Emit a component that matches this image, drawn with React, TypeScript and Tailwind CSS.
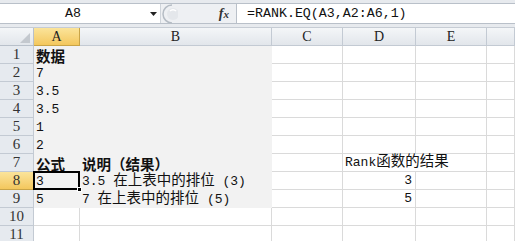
import React from 'react';
import clsx from 'clsx';

type Row = {
  n: number;
  a?: string;
  b?: string;
  d?: string;
  bold?: boolean;
  dRight?: boolean;
};

const rows: Row[] = [
  { n: 1, a: '数据', bold: true },
  { n: 2, a: '7' },
  { n: 3, a: '3.5' },
  { n: 4, a: '3.5' },
  { n: 5, a: '1' },
  { n: 6, a: '2' },
  { n: 7, a: '公式', b: '说明（结果）', d: 'Rank函数的结果', bold: true },
  { n: 8, a: '3', b: '3.5 在上表中的排位 (3)', d: '3', dRight: true },
  { n: 9, a: '5', b: '7 在上表中的排位 (5)', d: '5', dRight: true },
  { n: 10 },
  { n: 11 },
];

const colLetters = ['A', 'B', 'C', 'D', 'E', ''];

// split text into CJK / latin runs so each gets its own size (like SimSun half/full width)
function Mixed({ text, bold }: { text: string; bold?: boolean }) {
  const parts = text.split(/([\u3000-\u9fff\uff00-\uffef]+)/).filter(Boolean);
  return (
    <span className={clsx('inline-flex items-baseline leading-[14px]', bold && 'font-bold')}>
      {parts.map((p, i) =>
        /[\u3000-\u9fff\uff00-\uffef]/.test(p) ? (
          <span key={i} className="font-['Noto_Sans_CJK_SC',sans-serif] text-[14.5px]">
            {p}
          </span>
        ) : (
          <span key={i} className="font-['Liberation_Mono',monospace] text-[13px] font-normal whitespace-pre">
            {p}
          </span>
        )
      )}
    </span>
  );
}

function FormulaBar() {
  return (
    <div className="h-[28px] bg-[#e7eaee] border-b border-[#c6ccd4] pt-[3px]">
      <div className="flex h-[21px] border-y border-[#b9c0c9]">
        {/* name box */}
        <div className="w-[146px] bg-white flex items-center justify-center font-['Liberation_Mono',monospace] text-[13.3px] text-[#111]">
          A8
        </div>
        <div className="w-[14px] bg-white flex items-center justify-center">
          <svg width="7" height="4" viewBox="0 0 7 4">
            <path d="M0 0h7L3.5 4z" fill="#222" />
          </svg>
        </div>
        {/* splitter grip */}
        <div className="w-[76px] bg-[#eef0f3] flex items-center border-l border-[#cfd4da]">
          <svg width="16" height="20" viewBox="0 0 16 20" className="ml-[1px]">
            <path d="M10 1 A9 9 0 0 0 10 19" fill="none" stroke="#b5bcc4" strokeWidth="1.5" />
            <circle cx="11" cy="10" r="6" fill="#e4e7eb" />
            <path d="M8 7 A4 4 0 0 1 14 7" fill="none" stroke="#ffffff" strokeWidth="1.5" />
          </svg>
          <span className="ml-auto mr-[7px] font-['Liberation_Serif',serif] italic font-bold text-[14px] text-[#333] leading-none">
            f<span className="text-[11px]">x</span>
          </span>
        </div>
        <div className="flex-1 bg-white border-l border-[#b9c0c9] flex items-center pl-[10px] font-['Liberation_Mono',monospace] text-[13.3px] text-[#111]">
          =RANK.EQ(A3,A2:A6,1)
        </div>
      </div>
    </div>
  );
}

function Cell({ row, col }: { row: Row; col: number }) {
  const gray = row.n <= 9 && col <= 1;
  let text: string | undefined;
  if (col === 0) text = row.a;
  if (col === 1) text = row.b;
  if (col === 3) text = row.d;
  const selected = row.n === 8 && col === 0;
  const overflow = row.n === 7 && col === 3;

  return (
    <div
      className={clsx(
        'relative h-[18px] flex items-end whitespace-nowrap px-[2px] pb-[1px] text-[#111]',
        gray ? 'bg-[#f2f2f2]' : 'border-b border-[#dadada]',
        !gray && !overflow && 'border-r',
        col === 3 && row.dRight && 'justify-end pr-[3px]'
      )}
    >
      {text && (
        <span className={clsx('flex', overflow && 'relative z-10')}>
          <Mixed text={text} bold={row.bold && col <= 1} />
        </span>
      )}
      {selected && (
        <div className="absolute -left-[1px] -top-[1px] w-[47px] h-[19px] border-2 border-black z-20">
          <div className="absolute -right-[4px] -bottom-[4px] w-[5px] h-[5px] bg-black border border-white" />
        </div>
      )}
    </div>
  );
}

export default function App() {
  return (
    <div className="w-[515px] h-[241px] overflow-hidden bg-white">
      <FormulaBar />
      <div className="grid grid-cols-[34px_46px_192px_71px_73px_71px_1fr]">
        {/* corner */}
        <div className="h-[18px] bg-gradient-to-b from-[#f4f6f8] to-[#e2e6eb] border-r border-b border-[#b8c0ca] flex items-end justify-end pr-[3px] pb-[2px]">
          <svg width="10" height="10" viewBox="0 0 10 10">
            <path d="M10 0V10H0z" fill="#c3c8ce" />
          </svg>
        </div>
        {colLetters.map((l, i) => (
          <div
            key={l + i}
            className={clsx(
              'h-[18px] border-r border-b flex items-center justify-center font-["Liberation_Serif",serif] text-[14px] text-[#222]',
              i === 0
                ? 'bg-gradient-to-b from-[#fbe49a] to-[#f3c75c] border-[#c9a447]'
                : 'bg-gradient-to-b from-[#f4f6f8] to-[#e2e6eb] border-[#c3cad3]'
            )}
          >
            {l}
          </div>
        ))}
        {rows.map((row) => (
          <React.Fragment key={row.n}>
            <div
              className={clsx(
                'h-[18px] border-r border-b flex items-center justify-center font-["Liberation_Serif",serif] text-[15px] text-[#333]',
                row.n === 8
                  ? 'bg-gradient-to-b from-[#fbe49a] to-[#f3c75c] border-[#c9a447]'
                  : 'bg-[#e6eaef] border-[#c3cad3]'
              )}
            >
              {row.n}
            </div>
            {[0, 1, 2, 3, 4, 5].map((c) => (
              <Cell key={c} row={row} col={c} />
            ))}
          </React.Fragment>
        ))}
      </div>
    </div>
  );
}
